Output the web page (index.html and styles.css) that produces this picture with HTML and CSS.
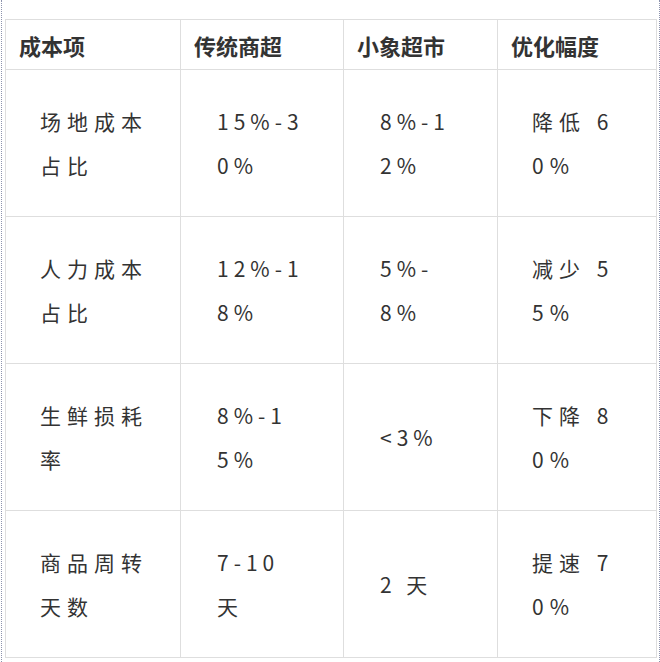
FILE: index.html
```html
<!DOCTYPE html>
<html lang="zh">
<head>
<meta charset="utf-8">
<link rel="stylesheet" href="styles.css">
</head>
<body>
<div class="page">
  <table class="cost">
    <colgroup>
      <col class="c1"><col class="c2"><col class="c3"><col class="c4">
    </colgroup>
    <thead>
      <tr class="head">
        <th>成本项</th><th>传统商超</th><th>小象超市</th><th>优化幅度</th>
      </tr>
    </thead>
    <tbody>
      <tr>
        <td>场地成本<br>占比</td>
        <td class="pad">15%-3<br>0%</td>
        <td class="pad">8%-1<br>2%</td>
        <td>降低 6<br>0%</td>
      </tr>
      <tr>
        <td>人力成本<br>占比</td>
        <td class="pad">12%-1<br>8%</td>
        <td class="pad">5%-<br>8%</td>
        <td>减少 5<br>5%</td>
      </tr>
      <tr>
        <td>生鲜损耗<br>率</td>
        <td class="pad">8%-1<br>5%</td>
        <td class="pad">&lt;3%</td>
        <td>下降 8<br>0%</td>
      </tr>
      <tr>
        <td>商品周转<br>天数</td>
        <td class="pad">7-10<br>天</td>
        <td class="pad">2 天</td>
        <td>提速 7<br>0%</td>
      </tr>
    </tbody>
  </table>
</div>
</body>
</html>
```

FILE: styles.css
```css
html, body {
  margin: 0;
  padding: 0;
  background: #fff;
}
.page {
  width: 659px;
  height: 662px;
  margin-left: 1px;
  border-left: 1px dotted #8d93ad;
  border-right: 1px dotted #8d93ad;
  padding: 19px 0 0 3px;
  box-sizing: border-box;
}
.cost {
  border-collapse: collapse;
  width: 651px;
  table-layout: fixed;
  font-family: "Noto Sans CJK SC", "Noto Sans", sans-serif;
  color: #333;
}
.c1 { width: 175px; }
.c2 { width: 163px; }
.c3 { width: 154px; }
.c4 { width: 159px; }
.cost th, .cost td {
  border: 1px solid #dedede;
  text-align: left;
  vertical-align: middle;
}
.cost th {
  height: 50px;
  padding: 0 0 0 13px;
  font-size: 22px;
  font-weight: bold;
  line-height: 28px;
  box-sizing: border-box;
}
.cost td {
  height: 147px;
  padding: 0 0 0 34px;
  font-size: 21px;
  line-height: 44px;
  letter-spacing: 6px;
  box-sizing: border-box;
}
.cost td.pad {
  padding-left: 36px;
  letter-spacing: 5px;
}
```
